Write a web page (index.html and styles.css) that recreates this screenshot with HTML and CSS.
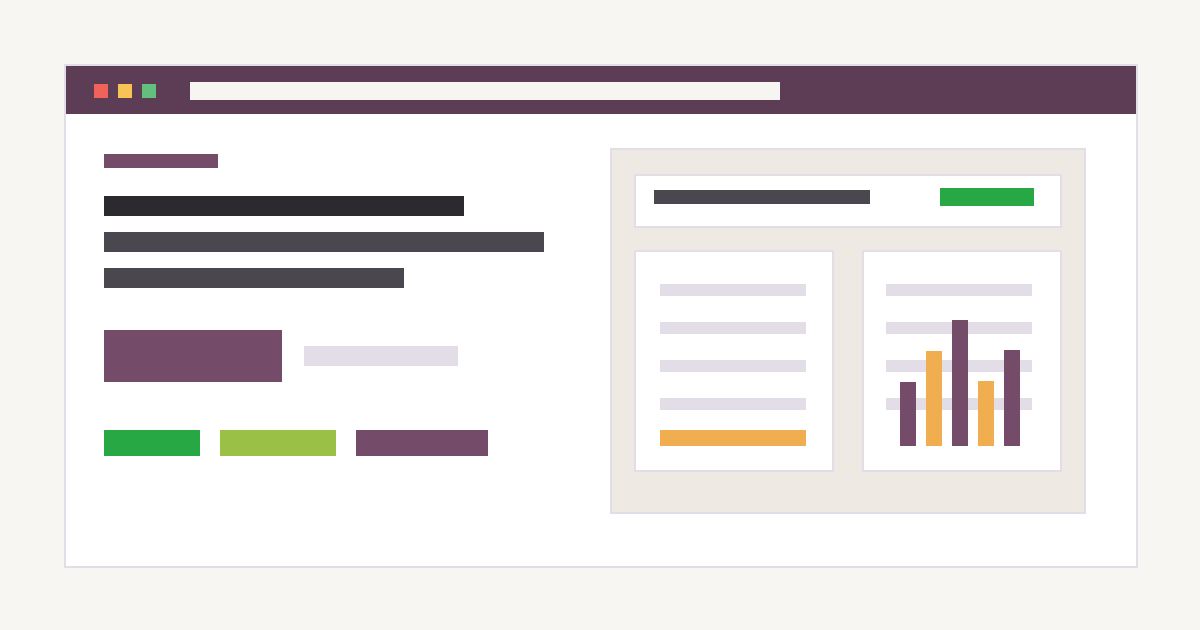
FILE: index.html
```html
<!DOCTYPE html>
<html lang="en">
<head>
<meta charset="utf-8">
<title>Dashboard illustration</title>
<link rel="stylesheet" href="styles.css">
</head>
<body>
<div class="window">
  <div class="titlebar">
    <div class="dots">
      <span class="dot dot-red"></span>
      <span class="dot dot-yellow"></span>
      <span class="dot dot-green"></span>
    </div>
    <div class="url"></div>
  </div>
  <div class="content">
    <div class="left">
      <div class="eyebrow"></div>
      <div class="headline h1"></div>
      <div class="headline h2"></div>
      <div class="headline h3"></div>
      <div class="cta-row">
        <div class="cta"></div>
        <div class="cta-note"></div>
      </div>
      <div class="tags">
        <div class="tag tag-green"></div>
        <div class="tag tag-lime"></div>
        <div class="tag tag-purple"></div>
      </div>
    </div>
    <div class="panel">
      <div class="panel-head">
        <div class="panel-title"></div>
        <div class="panel-btn"></div>
      </div>
      <div class="panel-cards">
        <div class="card card-list">
          <div class="line"></div>
          <div class="line"></div>
          <div class="line"></div>
          <div class="line"></div>
          <div class="line line-accent"></div>
        </div>
        <div class="card card-chart">
          <div class="grid-lines">
            <div class="line"></div>
            <div class="line"></div>
            <div class="line"></div>
            <div class="line"></div>
          </div>
          <div class="bars">
            <div class="bar bar-p" style="height:64px"></div>
            <div class="bar bar-o" style="height:95px"></div>
            <div class="bar bar-p" style="height:126px"></div>
            <div class="bar bar-o" style="height:65px"></div>
            <div class="bar bar-p" style="height:96px"></div>
          </div>
        </div>
      </div>
    </div>
  </div>
</div>
</body>
</html>
```

FILE: styles.css
```css
* { box-sizing: border-box; }

html, body {
  margin: 0;
  padding: 0;
}

body {
  background: #f7f6f2;
  padding: 64px;
  width: 1200px;
  height: 630px;
  font-family: "Liberation Sans", Arial, sans-serif;
}

.window {
  width: 1074px;
  height: 504px;
  border: 2px solid #e3dde8;
  background: #ffffff;
  display: flex;
  flex-direction: column;
}

.titlebar {
  height: 48px;
  background: #5d3c55;
  display: flex;
  align-items: flex-start;
  padding-left: 28px;
}

.dots {
  display: flex;
  gap: 10px;
  margin-top: 18px;
}

.dot {
  width: 14px;
  height: 14px;
  display: block;
}

.dot-red { background: #f0625a; }
.dot-yellow { background: #f7c355; }
.dot-green { background: #62c07c; }

.url {
  margin-top: 16px;
  margin-left: 34px;
  width: 590px;
  height: 18px;
  background: #f7f5f2;
}

.content {
  display: flex;
  padding: 34px 0 0 38px;
}

.left {
  width: 506px;
  padding-top: 6px;
  display: flex;
  flex-direction: column;
  align-items: flex-start;
}

.eyebrow {
  width: 114px;
  height: 14px;
  background: #744c6a;
}

.headline {
  height: 20px;
  background: #4a474f;
}

.h1 { width: 360px; margin-top: 28px; background: #2c2a2e; }
.h2 { width: 440px; margin-top: 16px; }
.h3 { width: 300px; margin-top: 16px; }

.cta-row {
  display: flex;
  align-items: center;
  gap: 22px;
  margin-top: 42px;
}

.cta {
  width: 178px;
  height: 52px;
  background: #744c6a;
}

.cta-note {
  width: 154px;
  height: 20px;
  background: #e3dde8;
}

.tags {
  display: flex;
  gap: 20px;
  margin-top: 48px;
}

.tag { height: 26px; }
.tag-green { width: 96px; background: #28a745; }
.tag-lime { width: 116px; background: #9bc046; }
.tag-purple { width: 132px; background: #744c6a; }

.panel {
  width: 476px;
  height: 366px;
  background: #eeeae3;
  border: 2px solid #e3dde8;
  padding: 24px 22px 0 22px;
  display: flex;
  flex-direction: column;
}

.panel-head {
  height: 54px;
  background: #ffffff;
  border: 2px solid #e3dde8;
  display: flex;
  justify-content: space-between;
  align-items: flex-start;
  padding: 12px 26px 0 18px;
}

.panel-title {
  width: 216px;
  height: 14px;
  margin-top: 2px;
  background: #4a474f;
}

.panel-btn {
  width: 94px;
  height: 18px;
  background: #28a745;
}

.panel-cards {
  display: flex;
  gap: 28px;
  margin-top: 22px;
}

.card {
  width: 200px;
  height: 222px;
  background: #ffffff;
  border: 2px solid #e3dde8;
}

.line {
  width: 146px;
  height: 12px;
  background: #e3dde8;
}

.card-list {
  display: flex;
  flex-direction: column;
  gap: 26px;
  padding: 32px 0 0 24px;
}

.card-list .line-accent {
  height: 16px;
  margin-top: -6px;
  background: #f0ae50;
}

.card-chart {
  display: grid;
  grid-template-areas: "stack";
}

.grid-lines {
  grid-area: stack;
  display: flex;
  flex-direction: column;
  gap: 26px;
  padding: 32px 0 0 22px;
}

.bars {
  grid-area: stack;
  align-self: end;
  display: flex;
  align-items: flex-end;
  gap: 10px;
  padding: 0 0 24px 36px;
}

.bar { width: 16px; }
.bar-p { background: #744c6a; }
.bar-o { background: #f0ae50; }
```
